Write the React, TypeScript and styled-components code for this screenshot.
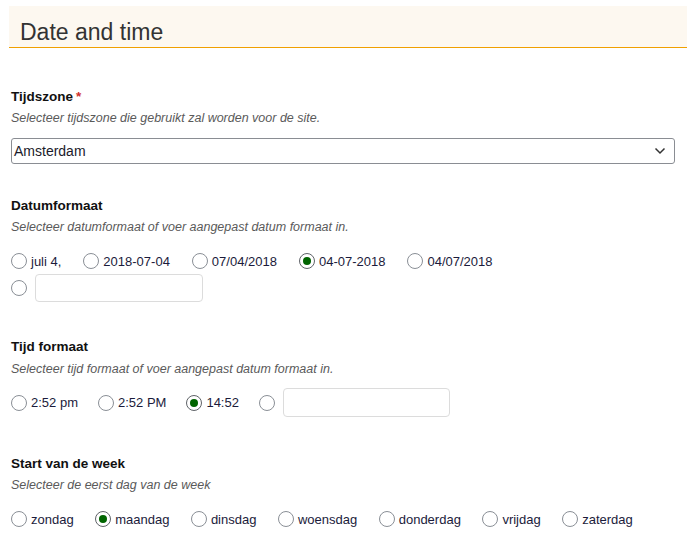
import React from 'react';
import styled, { createGlobalStyle } from 'styled-components';

const GlobalStyle = createGlobalStyle`
    body {
        margin: 0;
        background: #fff;
        font-family: "Liberation Sans", Arial, sans-serif;
        color: #1b1b2b;
    }
`;

const Page = styled.div`
    width: 687px;
    padding: 6px 0 0 9px;
    box-sizing: border-box;
`;

const Header = styled.div`
    height: 42px;
    box-sizing: border-box;
    display: flex;
    align-items: center;
    padding: 12px 0 0 11px;
    background: #fdf8f0;
    border-bottom: 1px solid #f0a000;
`;

const Title = styled.h1`
    margin: 0;
    font-size: 23px;
    font-weight: 400;
    color: #333;
`;

const Form = styled.div`
    padding: 39px 12px 0 2px;
`;

const Field = styled.div<{ $top: number }>`
    margin-top: ${(p) => p.$top}px;
`;

const Label = styled.div`
    font-size: 13.5px;
    font-weight: 700;
    line-height: 20px;
    color: #111;
`;

const Required = styled.span`
    color: #d0312d;
    margin-left: 3px;
`;

const Description = styled.div<{ $gap?: number }>`
    margin-top: ${(p) => p.$gap ?? 2}px;
    font-size: 12.5px;
    font-style: italic;
    line-height: 18px;
    color: #5a5a5a;
`;

const Select = styled.div`
    margin-top: 11px;
    height: 26px;
    box-sizing: border-box;
    display: flex;
    align-items: center;
    justify-content: space-between;
    padding: 0 8px 0 2px;
    border: 1px solid #8a8d93;
    border-radius: 3px;
    font-size: 14px;
    color: #1b1b2b;
`;

const Row = styled.div<{ $top: number; $spacing?: number }>`
    margin-top: ${(p) => p.$top}px;
    display: flex;
    align-items: center;
    --option-spacing: ${(p) => p.$spacing ?? 21}px;
`;

const Option = styled.label`
    display: flex;
    align-items: center;
    gap: 4px;
    margin-right: var(--option-spacing);
    height: 20px;
    font-size: 13px;
    color: #1b1b3b;
`;

const Radio = styled.span<{ $checked?: boolean }>`
    width: 16px;
    height: 16px;
    box-sizing: border-box;
    border-radius: 50%;
    border: 1px solid ${(p) => (p.$checked ? '#5f6368' : '#8a8f96')};
    background: #fff;
    display: flex;
    align-items: center;
    justify-content: center;
    flex: none;
    &::after {
        content: '';
        width: 8px;
        height: 8px;
        border-radius: 50%;
        background: ${(p) => (p.$checked ? '#006400' : 'transparent')};
    }
`;

const TextInput = styled.div<{ $width: number; $height: number }>`
    width: ${(p) => p.$width}px;
    height: ${(p) => p.$height}px;
    box-sizing: border-box;
    margin-left: 8px;
    border: 1px solid #dcdcdc;
    border-radius: 4px;
    background: #fff;
`;

const Chevron = () => (
    <svg width="12" height="8" viewBox="0 0 12 8">
        <path d="M1.5 1.5 L6 6 L10.5 1.5" fill="none" stroke="#333" strokeWidth="1.5" />
    </svg>
);

type Choice = { label: string; checked?: boolean };

const dateFormats: Choice[] = [
    { label: 'juli 4,' },
    { label: '2018-07-04' },
    { label: '07/04/2018' },
    { label: '04-07-2018', checked: true },
    { label: '04/07/2018' },
];

const timeFormats: Choice[] = [
    { label: '2:52 pm' },
    { label: '2:52 PM' },
    { label: '14:52', checked: true },
];

const weekDays: Choice[] = [
    { label: 'zondag' },
    { label: 'maandag', checked: true },
    { label: 'dinsdag' },
    { label: 'woensdag' },
    { label: 'donderdag' },
    { label: 'vrijdag' },
    { label: 'zaterdag' },
];

const Choices: React.FC<{ items: Choice[] }> = ({ items }) => (
    <>
        {items.map((c) => (
            <Option key={c.label}>
                <Radio $checked={c.checked} />
                {c.label}
            </Option>
        ))}
    </>
);

const App: React.FC = () => (
    <Page>
        <GlobalStyle />
        <Header>
            <Title>Date and time</Title>
        </Header>
        <Form>
            <Field $top={0}>
                <Label>
                    Tijdszone<Required>*</Required>
                </Label>
                <Description>Selecteer tijdszone die gebruikt zal worden voor de site.</Description>
                <Select>
                    Amsterdam
                    <Chevron />
                </Select>
            </Field>

            <Field $top={32}>
                <Label>Datumformaat</Label>
                <Description>Selecteer datumformaat of voer aangepast datum formaat in.</Description>
                <Row $top={15} $spacing={22}>
                    <Choices items={dateFormats} />
                </Row>
                <Row $top={3}>
                    <Radio />
                    <TextInput $width={168} $height={28} />
                </Row>
            </Field>

            <Field $top={35}>
                <Label>Tijd formaat</Label>
                <Description $gap={3}>Selecteer tijd formaat of voer aangepast datum formaat in.</Description>
                <Row $top={10} $spacing={20}>
                    <Choices items={timeFormats} />
                    <Radio />
                    <TextInput $width={167} $height={29} />
                </Row>
            </Field>

            <Field $top={37}>
                <Label>Start van de week</Label>
                <Description>Selecteer de eerst dag van de week</Description>
                <Row $top={15} $spacing={21.5}>
                    <Choices items={weekDays} />
                </Row>
            </Field>
        </Form>
    </Page>
);

export default App;
